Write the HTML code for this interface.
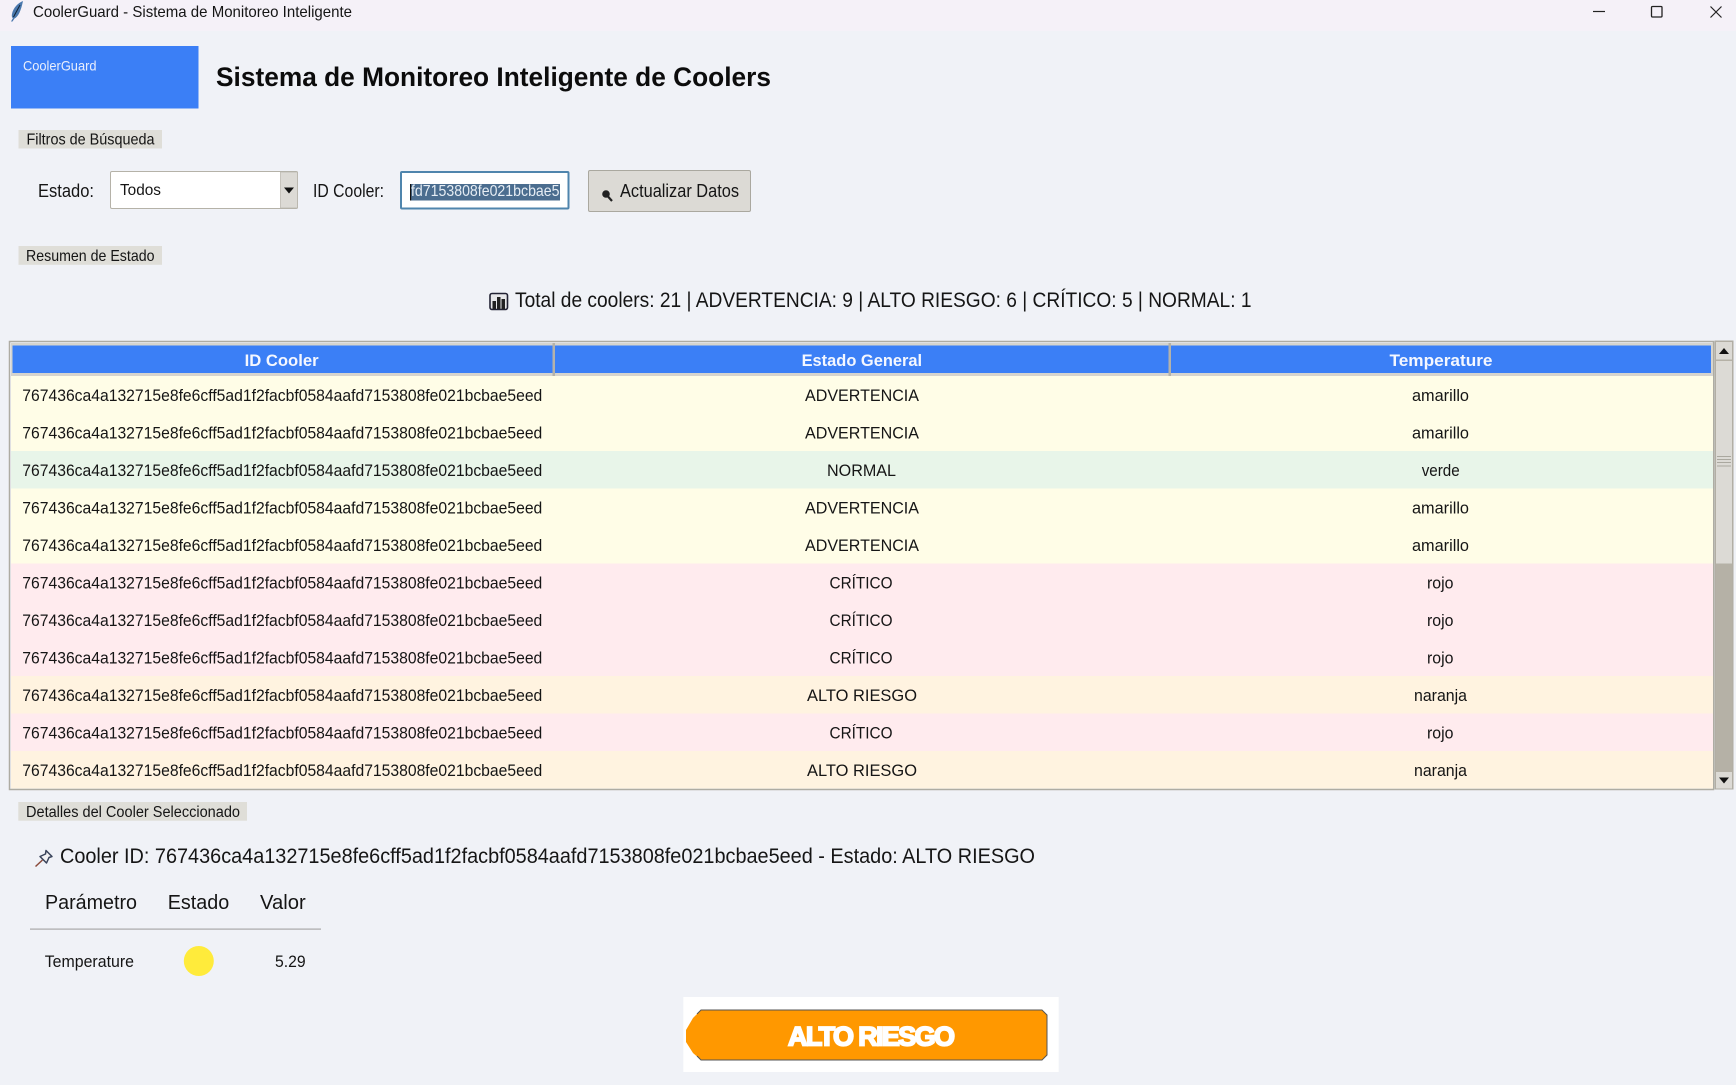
<!DOCTYPE html>
<html lang="es"><head><meta charset="utf-8"><title>CoolerGuard - Sistema de Monitoreo Inteligente</title>
<style>
html,body{margin:0;padding:0;width:1736px;height:1085px;overflow:hidden;background:#f0f2f7}
svg{display:block}
text{font-family:"Liberation Sans",sans-serif;fill:#151515}
.b{font-weight:700}
.r{font-size:17px}
.h{font-size:17px;font-weight:700;fill:#f4f7ff}
</style></head><body>
<svg width="1736" height="1085" viewBox="0 0 1736 1085" xmlns="http://www.w3.org/2000/svg">
<rect width="1736" height="1085" fill="#f0f2f7"/>
<rect width="1736" height="31" fill="#f5f1f8"/>
<!-- titlebar -->
<path d="M23 1C18 3 13 8 12 14C11.500 16 12 18 13 18L11 21.500L12.500 21.500L14.500 18.500C18 17 21 11 23 1Z" fill="#4a78ad"/>
<path d="M20 5L13.500 17" stroke="#123" stroke-width="1" fill="none"/>
<text x="33" y="17" font-size="16" textLength="319" lengthAdjust="spacingAndGlyphs">CoolerGuard - Sistema de Monitoreo Inteligente</text>
<path d="M1593 11.500H1605" stroke="#222" stroke-width="1.200"/>
<rect x="1651.500" y="6.500" width="10.500" height="10.500" rx="1" fill="none" stroke="#222" stroke-width="1.300"/>
<path d="M1710.500 6.500L1721.500 17.500M1721.500 6.500L1710.500 17.500" stroke="#222" stroke-width="1.200"/>
<!-- logo -->
<rect x="11" y="46" width="187.500" height="62.500" fill="#3b7ff6"/>
<text x="23" y="70.500" font-size="14" textLength="73.500" lengthAdjust="spacingAndGlyphs" style="fill:#e8eefc">CoolerGuard</text>
<text class="b" x="216" y="86" font-size="26.500" textLength="555" lengthAdjust="spacingAndGlyphs" style="fill:#0c0c0c">Sistema de Monitoreo Inteligente de Coolers</text>
<!-- filters -->
<rect x="18.500" y="130" width="143.500" height="18.500" fill="#dfded8"/>
<text x="26.500" y="144.500" font-size="16" textLength="128" lengthAdjust="spacingAndGlyphs">Filtros de Búsqueda</text>
<text x="38" y="197" font-size="18" textLength="56" lengthAdjust="spacingAndGlyphs">Estado:</text>
<rect x="110.500" y="171.500" width="187" height="37" rx="1.500" fill="#fff" stroke="#b5b2a8"/>
<rect x="280.500" y="172" width="17" height="36" fill="#dcdad5" stroke="#b5b2a8" stroke-width=".7"/>
<path d="M284 187.500H294L289 193.500Z" fill="#111"/>
<text x="120" y="195" font-size="16" textLength="41" lengthAdjust="spacingAndGlyphs">Todos</text>
<text x="313" y="197" font-size="18" textLength="71" lengthAdjust="spacingAndGlyphs">ID Cooler:</text>
<rect x="401" y="172" width="167.500" height="36.500" rx="1" fill="#fff" stroke="#4f85ad" stroke-width="2"/>
<rect x="411" y="184" width="149" height="16.500" fill="#4b6d8f"/>
<rect x="410" y="184" width="1.200" height="16.500" fill="#111"/>
<text x="411" y="196" font-size="16" textLength="148.500" lengthAdjust="spacingAndGlyphs" style="fill:#e6edf4">fd7153808fe021bcbae5</text>
<rect x="588.500" y="170.500" width="162" height="41" rx="1.500" fill="#dcdad5" stroke="#aaa89f"/>
<circle cx="606" cy="194" r="3.800" fill="#222"/>
<path d="M608 196.500L612 201" stroke="#222" stroke-width="2.200"/>
<text x="620" y="197" font-size="18" textLength="119" lengthAdjust="spacingAndGlyphs">Actualizar Datos</text>
<!-- summary -->
<rect x="18.500" y="246" width="143.500" height="18.800" fill="#dfded8"/>
<text x="26" y="261" font-size="16" textLength="128.500" lengthAdjust="spacingAndGlyphs">Resumen de Estado</text>
<rect x="490" y="293.500" width="17.500" height="16" rx="2" fill="#e8e8ea" stroke="#223" stroke-width="1.600"/>
<rect x="492.500" y="301" width="3.500" height="8" fill="#222"/><rect x="497" y="297" width="3.500" height="12" fill="#222"/><rect x="501.500" y="299" width="3.500" height="10" fill="#222"/>
<text x="515" y="307" font-size="21" textLength="736.500" lengthAdjust="spacingAndGlyphs">Total de coolers: 21 | ADVERTENCIA: 9 | ALTO RIESGO: 6 | CRÍTICO: 5 | NORMAL: 1</text>
<!-- table -->
<rect x="9.500" y="341.500" width="1704" height="448" fill="#f0f2f7" stroke="#aeaca3" stroke-width="1.500"/>
<rect x="11" y="343" width="1702" height="33" fill="#d6d4ce"/>
<rect x="12.500" y="345.500" width="1698.500" height="27.500" fill="#3b7ff6"/>
<rect x="552.500" y="343" width="2.500" height="33" fill="#b4b2aa"/>
<rect x="1168.500" y="343" width="2.500" height="33" fill="#b4b2aa"/>
<text class="h" x="244.600" y="366" textLength="74" lengthAdjust="spacingAndGlyphs">ID Cooler</text>
<text class="h" x="801.600" y="366" textLength="120.500" lengthAdjust="spacingAndGlyphs">Estado General</text>
<text class="h" x="1389.500" y="366" textLength="103" lengthAdjust="spacingAndGlyphs">Temperature</text>
<rect x="11" y="376" width="1702" height="75" fill="#fffde7"/>
<rect x="11" y="451" width="1702" height="37.500" fill="#e8f5e9"/>
<rect x="11" y="488.500" width="1702" height="75" fill="#fffde7"/>
<rect x="11" y="563.500" width="1702" height="112.500" fill="#ffebee"/>
<rect x="11" y="676" width="1702" height="37.500" fill="#fff3e0"/>
<rect x="11" y="713.500" width="1702" height="37.500" fill="#ffebee"/>
<rect x="11" y="751" width="1702" height="37.500" fill="#fff3e0"/>
<g class="r">
<text x="22.300" y="401" textLength="520" lengthAdjust="spacingAndGlyphs">767436ca4a132715e8fe6cff5ad1f2facbf0584aafd7153808fe021bcbae5eed</text>
<text x="805" y="401" textLength="114" lengthAdjust="spacingAndGlyphs">ADVERTENCIA</text>
<text x="1412" y="401" textLength="57" lengthAdjust="spacingAndGlyphs">amarillo</text>
<text x="22.300" y="438.500" textLength="520" lengthAdjust="spacingAndGlyphs">767436ca4a132715e8fe6cff5ad1f2facbf0584aafd7153808fe021bcbae5eed</text>
<text x="805" y="438.500" textLength="114" lengthAdjust="spacingAndGlyphs">ADVERTENCIA</text>
<text x="1412" y="438.500" textLength="57" lengthAdjust="spacingAndGlyphs">amarillo</text>
<text x="22.300" y="476" textLength="520" lengthAdjust="spacingAndGlyphs">767436ca4a132715e8fe6cff5ad1f2facbf0584aafd7153808fe021bcbae5eed</text>
<text x="827" y="476" textLength="69" lengthAdjust="spacingAndGlyphs">NORMAL</text>
<text x="1421.700" y="476" textLength="38" lengthAdjust="spacingAndGlyphs">verde</text>
<text x="22.300" y="513.500" textLength="520" lengthAdjust="spacingAndGlyphs">767436ca4a132715e8fe6cff5ad1f2facbf0584aafd7153808fe021bcbae5eed</text>
<text x="805" y="513.500" textLength="114" lengthAdjust="spacingAndGlyphs">ADVERTENCIA</text>
<text x="1412" y="513.500" textLength="57" lengthAdjust="spacingAndGlyphs">amarillo</text>
<text x="22.300" y="551" textLength="520" lengthAdjust="spacingAndGlyphs">767436ca4a132715e8fe6cff5ad1f2facbf0584aafd7153808fe021bcbae5eed</text>
<text x="805" y="551" textLength="114" lengthAdjust="spacingAndGlyphs">ADVERTENCIA</text>
<text x="1412" y="551" textLength="57" lengthAdjust="spacingAndGlyphs">amarillo</text>
<text x="22.300" y="588.500" textLength="520" lengthAdjust="spacingAndGlyphs">767436ca4a132715e8fe6cff5ad1f2facbf0584aafd7153808fe021bcbae5eed</text>
<text x="829.500" y="588.500" textLength="63" lengthAdjust="spacingAndGlyphs">CRÍTICO</text>
<text x="1427" y="588.500" textLength="26.500" lengthAdjust="spacingAndGlyphs">rojo</text>
<text x="22.300" y="626" textLength="520" lengthAdjust="spacingAndGlyphs">767436ca4a132715e8fe6cff5ad1f2facbf0584aafd7153808fe021bcbae5eed</text>
<text x="829.500" y="626" textLength="63" lengthAdjust="spacingAndGlyphs">CRÍTICO</text>
<text x="1427" y="626" textLength="26.500" lengthAdjust="spacingAndGlyphs">rojo</text>
<text x="22.300" y="663.500" textLength="520" lengthAdjust="spacingAndGlyphs">767436ca4a132715e8fe6cff5ad1f2facbf0584aafd7153808fe021bcbae5eed</text>
<text x="829.500" y="663.500" textLength="63" lengthAdjust="spacingAndGlyphs">CRÍTICO</text>
<text x="1427" y="663.500" textLength="26.500" lengthAdjust="spacingAndGlyphs">rojo</text>
<text x="22.300" y="701" textLength="520" lengthAdjust="spacingAndGlyphs">767436ca4a132715e8fe6cff5ad1f2facbf0584aafd7153808fe021bcbae5eed</text>
<text x="807" y="701" textLength="110" lengthAdjust="spacingAndGlyphs">ALTO RIESGO</text>
<text x="1414" y="701" textLength="53" lengthAdjust="spacingAndGlyphs">naranja</text>
<text x="22.300" y="738.500" textLength="520" lengthAdjust="spacingAndGlyphs">767436ca4a132715e8fe6cff5ad1f2facbf0584aafd7153808fe021bcbae5eed</text>
<text x="829.500" y="738.500" textLength="63" lengthAdjust="spacingAndGlyphs">CRÍTICO</text>
<text x="1427" y="738.500" textLength="26.500" lengthAdjust="spacingAndGlyphs">rojo</text>
<text x="22.300" y="776" textLength="520" lengthAdjust="spacingAndGlyphs">767436ca4a132715e8fe6cff5ad1f2facbf0584aafd7153808fe021bcbae5eed</text>
<text x="807" y="776" textLength="110" lengthAdjust="spacingAndGlyphs">ALTO RIESGO</text>
<text x="1414" y="776" textLength="53" lengthAdjust="spacingAndGlyphs">naranja</text>
</g>
<!-- scrollbar -->
<rect x="1715" y="341" width="18" height="448" fill="#b5b1a6" stroke="#aeaca3"/>
<rect x="1716" y="342" width="16" height="17.500" fill="#dcdad5"/>
<path d="M1719 354H1729L1724 348Z" fill="#111"/>
<rect x="1716" y="361" width="16" height="202.500" fill="#dcdad5"/>
<path d="M1717 456.500H1731M1717 459.500H1731M1717 462.500H1731M1717 466H1731" stroke="#aaa89f" stroke-width="1"/>
<rect x="1716" y="772" width="16" height="16.500" fill="#dcdad5"/>
<path d="M1719 777.500H1729L1724 783.500Z" fill="#111"/>
<!-- details -->
<rect x="18.300" y="802" width="228.700" height="18.700" fill="#dfded8"/>
<text x="26" y="817" font-size="15.500" textLength="214" lengthAdjust="spacingAndGlyphs">Detalles del Cooler Seleccionado</text>
<g fill="#f2f2f4" stroke="#39435a" stroke-width="1.500" stroke-linejoin="round">
<path d="M46 850.500L52 856.500L49 857.500L46.500 863L40 856.500L45.500 854Z"/>
</g>
<path d="M42.500 860L35.500 866.500" stroke="#8a4a3a" stroke-width="1.500"/>
<text x="60" y="863" font-size="21" textLength="975" lengthAdjust="spacingAndGlyphs">Cooler ID: 767436ca4a132715e8fe6cff5ad1f2facbf0584aafd7153808fe021bcbae5eed - Estado: ALTO RIESGO</text>
<text x="45" y="909" font-size="20" textLength="92" lengthAdjust="spacingAndGlyphs">Parámetro</text>
<text x="167.700" y="909" font-size="20" textLength="61.500" lengthAdjust="spacingAndGlyphs">Estado</text>
<text x="260" y="909" font-size="20" textLength="45.700" lengthAdjust="spacingAndGlyphs">Valor</text>
<rect x="30" y="928.500" width="291" height="1.200" fill="#a8a8a8"/>
<text x="44.700" y="967" font-size="16.500" textLength="89.300" lengthAdjust="spacingAndGlyphs">Temperature</text>
<circle cx="198.800" cy="961" r="15" fill="#ffeb3b"/>
<text x="275" y="967" font-size="16.500" textLength="30.700" lengthAdjust="spacingAndGlyphs">5.29</text>
<!-- badge -->
<rect x="683.300" y="997" width="375.400" height="75" fill="#fff"/>
<path d="M701 1010H1042L1047 1015V1055L1042 1060H701L693 1053L686 1042V1030L693 1018Z" fill="#ff9800"/>
<path d="M697 1014L701 1010H1042L1047 1015V1055L1042 1060H701L697 1056" fill="none" stroke="#555" stroke-width="1"/>
<text class="b" x="788" y="1045.500" font-size="27" textLength="167" lengthAdjust="spacing" style="fill:#fff;stroke:#fff;stroke-width:1.800;paint-order:stroke">ALTO RIESGO</text>
</svg>
</body></html>
